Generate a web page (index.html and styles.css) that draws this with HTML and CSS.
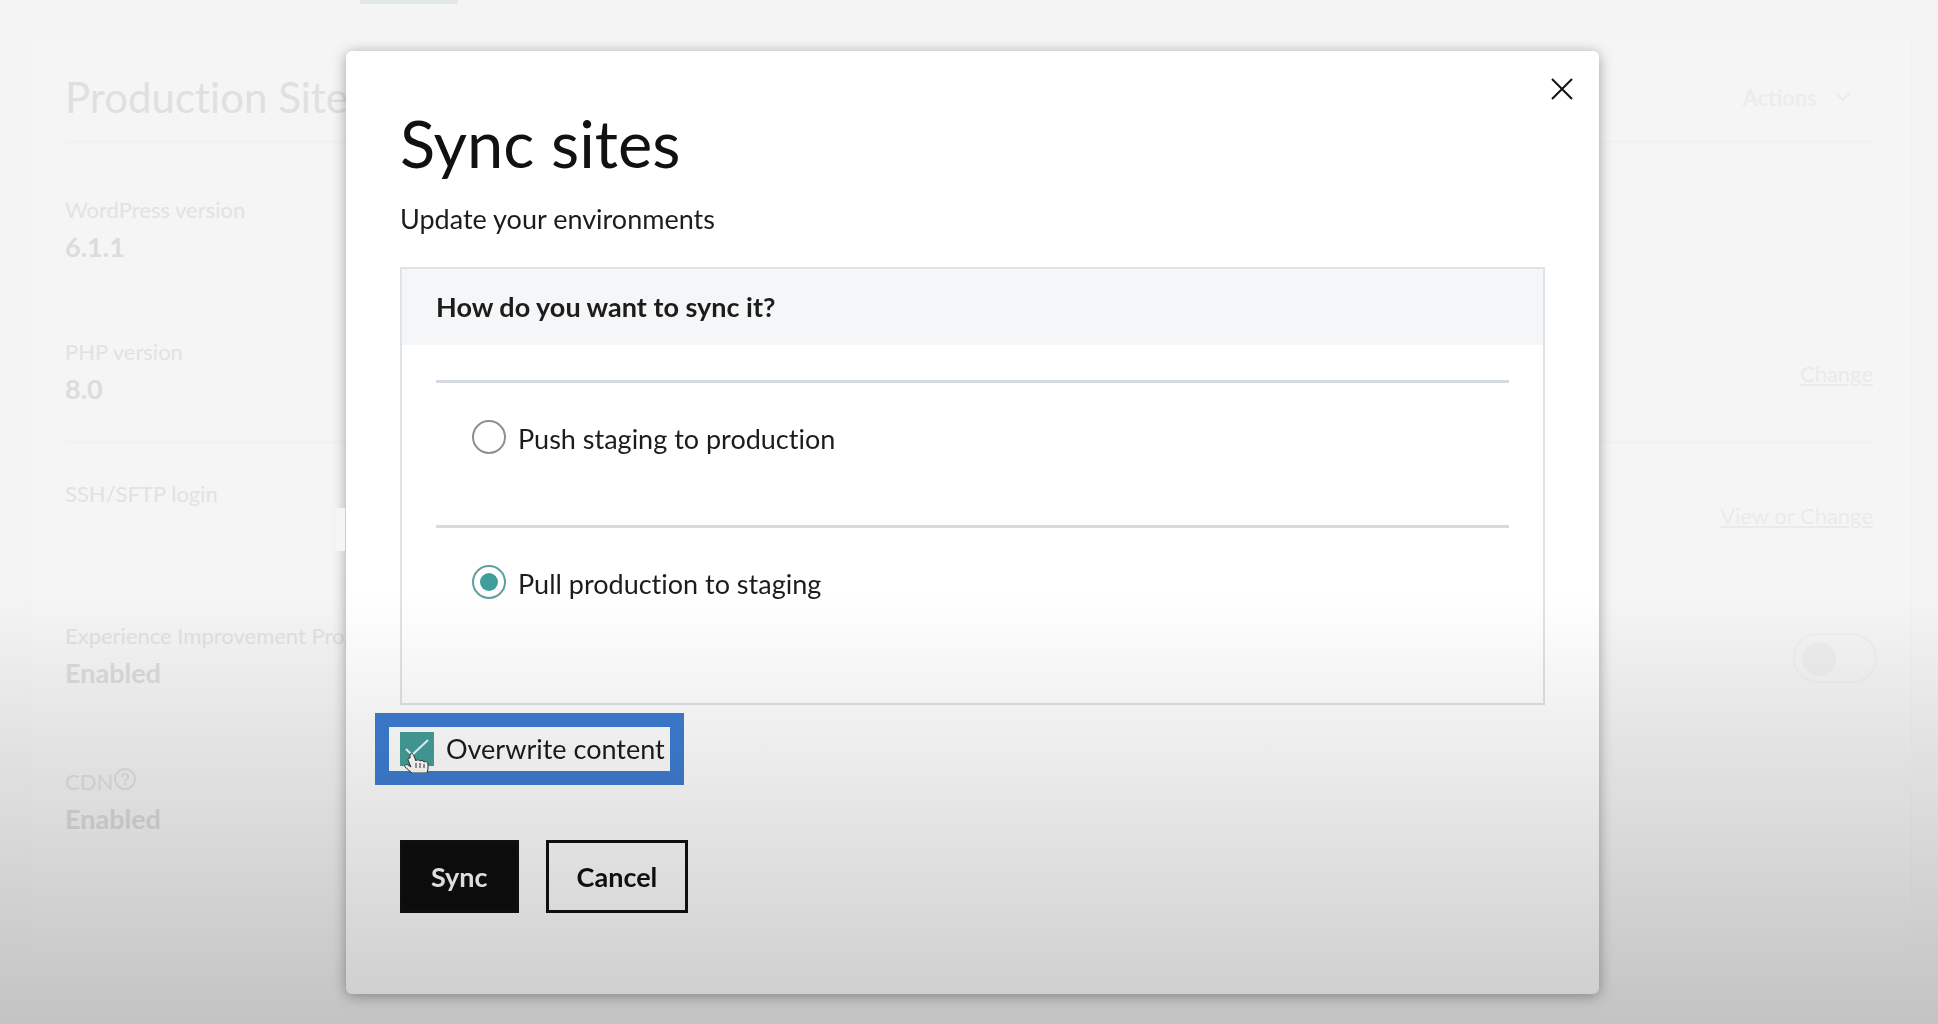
FILE: index.html
```html
<!DOCTYPE html>
<html lang="en">
<head>
    <meta charset="UTF-8">
    <meta name="viewport" content="width=device-width, initial-scale=1.0">
    <title>Sync sites</title>
    <link rel="stylesheet" href="styles.css">
</head>
<body>
    <div class="page">
        <div class="tabs"><span class="tab-active"></span></div>
        <main class="card">
            <div class="card-header">
                <h2>Production Site</h2>
                <button class="actions" type="button">
                    Actions
                    <svg width="16" height="10" viewBox="0 0 16 10"><path d="M1 1l7 7 7-7" fill="none" stroke="currentColor" stroke-width="2"/></svg>
                </button>
            </div>
            <div class="row row-plain">
                <div>
                    <div class="label">WordPress version</div>
                    <div class="value">6.1.1</div>
                </div>
            </div>
            <div class="row">
                <div>
                    <div class="label">PHP version</div>
                    <div class="value">8.0</div>
                </div>
                <a href="#">Change</a>
            </div>
            <div class="row">
                <div>
                    <div class="label">SSH/SFTP login</div>
                </div>
                <a href="#">View or Change</a>
            </div>
            <div class="row row-plain">
                <div>
                    <div class="label">Experience Improvement Program</div>
                    <div class="value">Enabled</div>
                </div>
                <input class="toggle" type="checkbox" aria-label="Experience Improvement Program">
            </div>
            <div class="row">
                <div>
                    <div class="label">CDN<svg class="help" width="24" height="24" viewBox="0 0 24 24" fill="none" stroke="currentColor" stroke-width="2"><circle cx="12" cy="12" r="10"/><path d="M9 10a3 3 0 1 1 4 2.600q-1 .4-1 1.800M12 16v2"/></svg></div>
                    <div class="value">Enabled</div>
                </div>
            </div>
        </main>
    </div>

    <div class="overlay">
        <div class="modal" role="dialog" aria-labelledby="modal-title">
            <span class="notch"></span>
            <button class="close" type="button" aria-label="Close">
                <svg width="24" height="24" viewBox="0 0 24 24"><path d="M2 2l20 20M22 2L2 22" stroke="#111" stroke-width="2"/></svg>
            </button>
            <h1 id="modal-title">Sync sites</h1>
            <p class="subtitle">Update your environments</p>

            <fieldset class="options">
                <legend>How do you want to sync it?</legend>
                <label class="option">
                    <input type="radio" name="direction">
                    <span>Push staging to production</span>
                </label>
                <label class="option">
                    <input type="radio" name="direction" checked>
                    <span>Pull production to staging</span>
                </label>
            </fieldset>

            <label class="overwrite">
                <input type="checkbox" checked>
                <span>Overwrite content</span>
                <svg class="check" width="24" height="18" viewBox="0 0 24 18"><path d="M1 10l6 6L23 1" fill="none" stroke="#e4ffff" stroke-width="2"/></svg>
                <svg class="cursor" width="28" height="20" viewBox="0 0 28 20"><path d="M7 1c2-1 3 0 4 2l2 5c1-2 3-1 4 0 1-1 3-1 4 1 2-1 4 0 4 2v5l-1 4H9l-7-6c-1-2 1-3 3-2l3 2-3-7c0-1 0-2 2-2z" fill="#fff" stroke="#333" stroke-width="1"/><path d="M13 10v5M17 10v5M21 11v4" stroke="#333" stroke-width="1"/></svg>
            </label>

            <div class="buttons">
                <button class="btn btn-primary" type="button">Sync</button>
                <button class="btn" type="button">Cancel</button>
            </div>
        </div>
    </div>
    <div class="shade"></div>
</body>
</html>
```
FILE: styles.css
```css
* {
    box-sizing: border-box;
}
body {
    margin: 0;
    min-height: 100vh;
    font-family: Lato, "Liberation Sans", sans-serif;
    font-variant-ligatures: none;
    background-color: #f4f4f4;
    color: #1c1c1c;
    overflow: hidden;
}
button, input {
    font-family: inherit;
    margin: 0;
}

/* page behind the dialog */
.page {
    color: #e2e2e2;
}
.tabs {
    height: 38px;
    padding-left: 360px;
}
.tab-active {
    display: block;
    width: 98px;
    height: 4px;
    background: #e0e9e7;
}
.card {
    margin: 0 26px 0 30px;
    padding: 0 34px;
    background: #f5f5f5;
    border: 1px solid #f2f2f2;
}
.card-header {
    display: flex;
    justify-content: space-between;
    align-items: center;
    height: 104px;
    padding-top: 14px;
    margin-bottom: 16px;
    border-bottom: 2px solid #f2f2f2;
}
.card-header h2 {
    margin: 0;
    font-size: 42px;
    font-weight: 400;
    color: #e0e0e0;
}
.actions {
    display: flex;
    align-items: center;
    gap: 18px;
    padding: 0 26px 0 0;
    background: none;
    border: none;
    font-size: 22px;
    font-weight: bold;
    color: #ebeded;
}
.row {
    display: flex;
    justify-content: space-between;
    min-height: 142px;
    padding-top: 36px;
    border-bottom: 2px solid #f2f2f2;
}
.row-plain {
    border-bottom-color: transparent;
}
.row:nth-child(5) {
    min-height: 146px;
}
.row:last-child {
    border-bottom: none;
    min-height: 224px;
}
.label {
    display: flex;
    height: 30px;
    line-height: 30px;
    font-size: 22px;
}
.value {
    margin-top: 4px;
    line-height: 36px;
    font-size: 27px;
    font-weight: bold;
    color: #dcdcdc;
}
.row a {
    margin: 22px 4px 0 0;
    height: 30px;
    line-height: 30px;
    font-size: 22px;
    color: #e9ebeb;
}
.help {
    flex: none;
}
.toggle {
    appearance: none;
    width: 84px;
    height: 50px;
    padding: 7px;
    margin-top: 12px;
    border: 2px solid #f0f0f0;
    border-radius: 25px;
}
.toggle::before {
    content: "";
    display: block;
    width: 34px;
    height: 34px;
    border-radius: 50%;
    background: #efefef;
}

/* dialog */
.overlay {
    position: fixed;
    inset: 0;
    display: flex;
    justify-content: center;
    align-items: flex-start;
    padding: 51px 28px 28px 35px;
}
.modal {
    position: relative;
    width: 100%;
    max-width: 1253px;
    padding: 54px 54px 81px;
    background: #fff;
    border-radius: 6px;
    box-shadow: 0 2px 14px rgba(0, 0, 0, 0.35);
}
.notch {
    position: absolute;
    left: -11px;
    top: 457px;
    width: 10px;
    height: 43px;
    background: #f5f5f5;
}
.close {
    position: absolute;
    top: 26px;
    right: 25px;
    padding: 0;
    background: none;
    border: none;
    line-height: 0;
}
.modal h1 {
    margin: 0;
    line-height: 76px;
    font-size: 65px;
    font-weight: 400;
    color: #111;
}
.subtitle {
    margin: 20px 0 30px;
    line-height: 36px;
    font-size: 27px;
}
.options {
    min-width: 0;
    margin: 0;
    padding: 0 34px 33px;
    border: 2px solid #dfe3e6;
}
.options legend {
    float: left;
    width: calc(100% + 68px);
    margin: 0 -34px 35px;
    padding: 0 34px;
    line-height: 76px;
    font-size: 27px;
    font-weight: bold;
    background: #f4f6f8;
}
.option {
    clear: both;
    display: flex;
    align-items: flex-start;
    gap: 12px;
    height: 145px;
    padding: 37px 36px;
    border-top: 3px solid #d5d9e0;
    line-height: 38px;
    font-size: 27px;
}
.option input {
    appearance: none;
    width: 34px;
    height: 34px;
    padding: 6px;
    border: 2px solid #8f8f8f;
    border-radius: 50%;
}
.option input:checked {
    border-color: #5f9f9f;
}
.option input:checked::before {
    content: "";
    display: block;
    width: 18px;
    height: 18px;
    border-radius: 50%;
    background: #3f9e9c;
}
.overwrite {
    position: relative;
    display: flex;
    align-items: center;
    gap: 12px;
    width: fit-content;
    margin: 8px 0 0 -25px;
    padding: 5px 5px 5px 11px;
    border: 14px solid #3e7dd2;
    line-height: 34px;
    font-size: 27px;
}
.overwrite input {
    appearance: none;
    width: 34px;
    height: 34px;
    background: #459f9b;
}
.check {
    position: absolute;
    left: 16px;
    top: 12px;
}
.cursor {
    position: absolute;
    left: 14px;
    top: 26px;
}
.buttons {
    display: flex;
    gap: 27px;
    margin-top: 55px;
}
.btn {
    height: 73px;
    padding: 0 28px;
    border: 3px solid #111;
    background: transparent;
    font-size: 27px;
    font-weight: bold;
    color: #111;
}
.btn-primary {
    background: #0e0e0e;
    color: #fff;
}

/* darkens the lower part of the screen */
.shade {
    position: fixed;
    inset: 0;
    pointer-events: none;
    background: linear-gradient(rgba(0, 0, 0, 0) 58%, rgba(0, 0, 0, 0.2));
}
```
